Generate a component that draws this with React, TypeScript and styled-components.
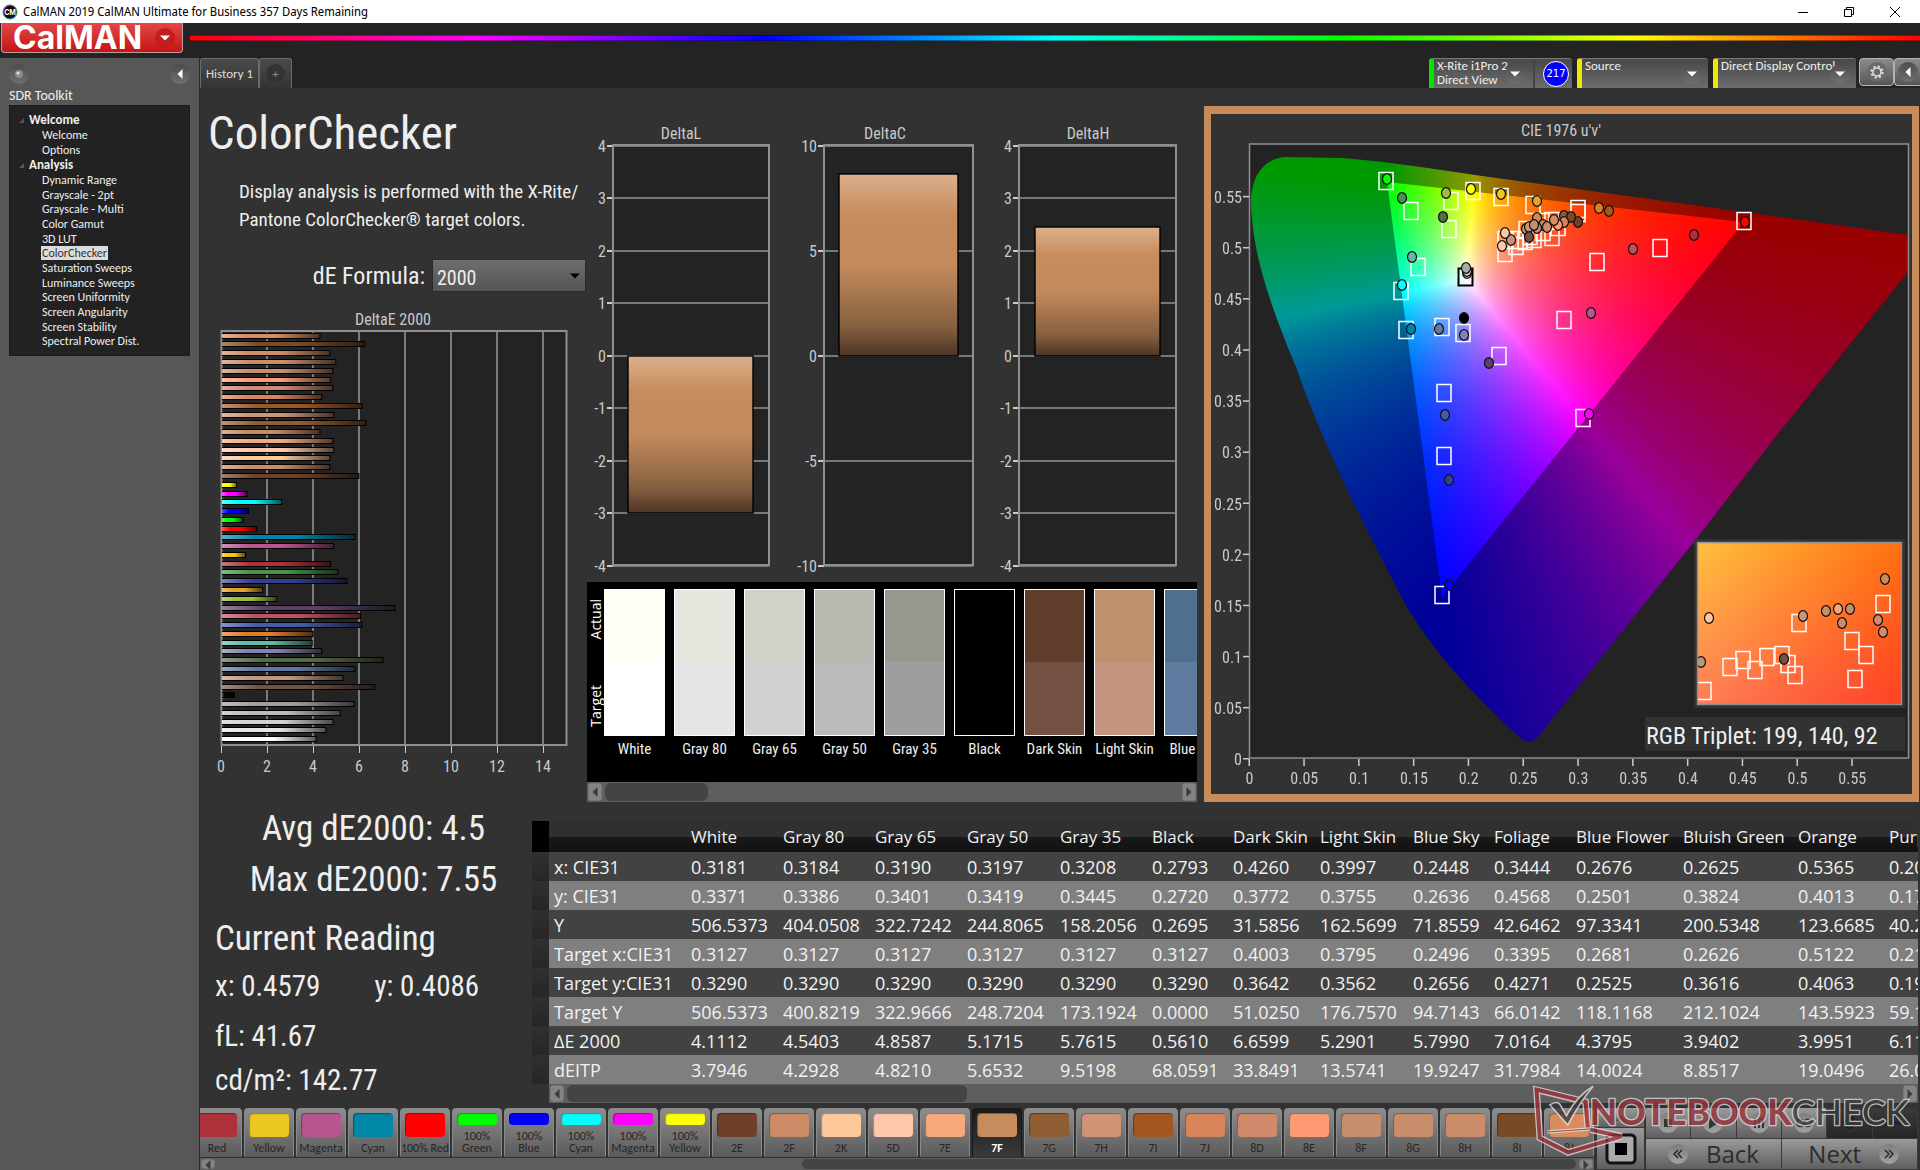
import React, { useEffect, useRef } from 'react';
import styled, { createGlobalStyle } from 'styled-components';

const UI = 'Carlito, "Open Sans", sans-serif';
const NARROW = '"Roboto Condensed", Carlito, "Open Sans", sans-serif';
const GRID = '"Open Sans", "Noto Sans", sans-serif';

const Global = createGlobalStyle`
  * { box-sizing: border-box; }
  body { margin: 0; background: #232323; color: #eee; font-family: ${UI}; }
  button { font: inherit; color: inherit; border: 0; padding: 0; background: none; }
  h1, h2, p, ul { margin: 0; padding: 0; font-weight: 400; list-style: none; }
  svg { display: block; }
`;

/* ---------- window frame ---------- */
const Page = styled.div`
  min-height: 100vh;
  display: flex;
  flex-direction: column;
  overflow: hidden;
`;
const TitleBar = styled.div`
  height: 23px;
  background: #fff;
  color: #000;
  display: flex;
  align-items: center;
  padding: 0 2px;
  font: 12px/16px "Noto Sans Display", "Open Sans", sans-serif;
`;
const TitleText = styled.span`
  flex: 1;
  padding-left: 5px;
`;
const WindowButton = styled.button`
  width: 46px;
  height: 23px;
  display: grid;
  place-items: center;
`;
const Header = styled.header`
  height: 35px;
  display: flex;
  align-items: flex-start;
  gap: 7px;
  padding-left: 1px;
  background: #232323;
`;
const LogoButton = styled.button`
  width: 182px;
  height: 30px;
  display: flex;
  align-items: center;
  justify-content: space-between;
  padding: 0 7px 0 11px;
  border: 1px solid #b9a0a0;
  border-top: 0;
  border-radius: 0 0 4px 4px;
  background: linear-gradient(#e04747, #c61414);
  color: #fff;
  font: 700 32px/28px Inter, sans-serif;
`;
const LogoCaret = styled.span`
  width: 20px;
  height: 20px;
  border-radius: 50%;
  display: grid;
  place-items: center;
  background: #c51d1d;
`;
const Spectrum = styled.div`
  flex: 1;
  height: 6px;
  margin-top: 12px;
  border: 1px solid rgba(0, 0, 0, 0.4);
  border-width: 1px 0;
  background: linear-gradient(90deg, #f00, #f0f, #00f, #0ff, #0f0, #ff0, #f00);
  background-clip: border-box;
`;
const Body = styled.div`
  flex: 1;
  display: grid;
  grid-template-columns: 200px minmax(0, 1fr);
`;

/* ---------- sidebar ---------- */
const Sidebar = styled.aside`
  background: #575757;
  border-right: 1px solid #2a2a2a;
  padding: 4px 9px 0;
`;
const SideTop = styled.div`
  display: flex;
  justify-content: space-between;
  height: 24px;
  align-items: center;
`;
const RoundButton = styled.button`
  width: 20px;
  height: 20px;
  flex: none;
  border-radius: 50%;
  display: grid;
  place-items: center;
  background: linear-gradient(#4c4c4c, #707070);
`;
const SideTitle = styled.h2`
  font-size: 14px;
  line-height: 19px;
  color: #f0f0f0;
`;
const Tree = styled.nav`
  border: 1px solid #1b1b1b;
  background: #222;
  padding: 6px 0 6px 9px;
`;
const TreeGroup = styled.button`
  display: flex;
  align-items: center;
  gap: 5px;
  font-size: 13px;
  font-weight: 700;
  line-height: 16px;
`;
const TreeList = styled.ul<{ $h: number }>`
  display: grid;
  grid-auto-rows: minmax(0, 1fr);
  height: ${p => p.$h}px;
  padding-left: 22px;
`;
const TreeLink = styled.a<{ $active?: boolean }>`
  display: block;
  width: fit-content;
  padding: 0 1px;
  font-size: 12px;
  line-height: 14px;
  text-decoration: none;
  white-space: nowrap;
  color: ${p => (p.$active ? '#333' : '#eee')};
  background: ${p => (p.$active ? '#dcdcdc' : 'none')};
`;

/* ---------- tab row ---------- */
const Main = styled.main`
  display: flex;
  flex-direction: column;
  min-width: 0;
`;
const TabRow = styled.div`
  display: flex;
  height: 30px;
  background: #232323;
`;
const Tab = styled.button<{ $w: number }>`
  width: ${p => p.$w}px;
  border: 1px solid #6b6b6b;
  border-bottom: 0;
  border-radius: 3px 3px 0 0;
  background: linear-gradient(#4b4b4b, #343434);
  font-size: 13px;
  color: #ddd;
  display: grid;
  place-items: center;
`;
const Plus = styled.span`
  width: 19px;
  height: 19px;
  border-radius: 50%;
  background: #333;
  color: #888;
  display: grid;
  place-items: center;
`;
const Spacer = styled.div`flex: 1;`;
const Pods = styled.div`
  display: flex;
  gap: 5px;
  padding-right: 3px;
`;
const Pod = styled.div<{ $w: number; $accent: string; $tight?: boolean }>`
  width: ${p => p.$w}px;
  display: flex;
  align-items: center;
  gap: 8px;
  padding-right: ${p => (p.$tight ? 3 : 6)}px;
  border-left: 5px solid ${p => p.$accent};
  border-top: 1px solid #7a7a7a;
  border-radius: 3px 3px 0 0;
  background: linear-gradient(#484848, #6c6c6c);
  font-size: 13px;
  line-height: 14px;
  color: #eee;
`;
const PodText = styled.span`
  flex: 1;
  min-width: 0;
  align-self: flex-start;
  padding-left: 3px;
  white-space: nowrap;
`;
const Badge = styled.span`
  width: 26px;
  height: 26px;
  flex: none;
  border-radius: 50%;
  border: 1px solid #fff;
  background: #00f;
  color: #fff;
  display: grid;
  place-items: center;
  font: 10px/12px "DejaVu Sans", sans-serif;
`;
const PodDivider = styled.span`
  width: 2px;
  height: 28px;
  flex: none;
  background: #444;
`;
const ToolButton = styled.button<{ $w: number; $flat?: boolean }>`
  width: ${p => p.$w}px;
  height: 28px;
  display: grid;
  place-items: center;
  border: 1px solid #b4b4b4;
  border-right-width: ${p => (p.$flat ? 0 : 1)}px;
  border-radius: ${p => (p.$flat ? '4px 0 0 4px' : '4px')};
  background: linear-gradient(#8b8b8b, #565656);
`;

/* ---------- workspace ---------- */
const Workspace = styled.div`
  flex: 1;
  background: #323232;
`;
const TopRow = styled.div`
  display: grid;
  grid-template-columns: 387px 610px minmax(0, 1fr);
  align-items: start;
`;
const Intro = styled.section`
  padding-top: 17px;
  font-family: ${NARROW};
`;
const Title = styled.h1`
  padding-left: 8px;
  font-size: 47px;
  line-height: 56px;
`;
const Lead = styled.p`
  padding: 17px 0 25px 39px;
  font-size: 19px;
  line-height: 28px;
  white-space: nowrap;
`;
const FormulaRow = styled.div`
  display: flex;
  justify-content: flex-end;
  align-items: center;
  gap: 7px;
  padding-right: 1px;
  margin-bottom: 7px;
`;
const FormulaLabel = styled.label`font-size: 24px; line-height: 32px;`;
const SelectWrap = styled.span`
  display: grid;
  align-items: center;
  & > * { grid-area: 1 / 1; }
  & > svg { justify-self: end; margin-right: 6px; pointer-events: none; }
`;
const Select = styled.select`
  appearance: none;
  width: 154px;
  height: 33px;
  border: 1px solid #2a2a2a;
  border-radius: 0;
  background: linear-gradient(#6e6e6e, #545454);
  color: #eee;
  font: 20px/24px ${NARROW};
  padding: 4px 4px 0;
`;
const ChartText = styled.text`
  font: 16px ${NARROW};
  fill: #c9c9c9;
`;
const DeltaRow = styled.div`
  display: flex;
  padding-top: 22px;
`;

/* ---------- swatch strip ---------- */
const Strip = styled.div`
  height: 200px;
  background: #000;
  display: flex;
  overflow: hidden;
  padding-top: 7px;
`;
const StripSide = styled.div`
  width: 17px;
  height: 148px;
  flex: none;
  display: flex;
  flex-direction: column;
  align-items: center;
  justify-content: space-between;
  padding: 10px 0;
`;
const SideLabel = styled.span`
  writing-mode: vertical-rl;
  rotate: 180deg;
  font: 14px/16px ${GRID};
  color: #fff;
`;
const SwatchCell = styled.figure`
  margin: 0 9px 0 0;
  width: 61px;
  flex: none;
  display: flex;
  flex-direction: column;
  align-items: center;
`;
const SwatchPair = styled.div<{ $a: string; $t: string }>`
  width: 61px;
  height: 147px;
  border: 1px solid #fff;
  background: linear-gradient(${p => p.$a} 50%, ${p => p.$t} 50%);
`;
const SwatchName = styled.figcaption`
  font: 15px/26px ${NARROW};
  white-space: nowrap;
`;

/* ---------- scrollbar ---------- */
const Bar = styled.div<{ $h: number }>`
  height: ${p => p.$h}px;
  display: flex;
  align-items: center;
  gap: 3px;
  padding: 0 1px;
  background: #5e5e5e;
`;
const BarButton = styled.button`
  width: 14px;
  height: calc(100% - 2px);
  border-radius: 3px;
  border: 1px solid #767676;
  background: #848484;
  display: grid;
  place-items: center;
`;
const BarTrack = styled.div`
  flex: 1;
  height: 100%;
  padding: 1px 0;
`;
const BarThumb = styled.div<{ $x: number; $w: number }>`
  width: ${p => p.$w}%;
  margin-left: ${p => p.$x}%;
  height: 100%;
  border-radius: 6px;
  background: #444;
`;

/* ---------- CIE panel ---------- */
const CiePanel = styled.section`
  margin: 18px 1px 0 7px;
  border: solid #c78c5c;
  border-width: 8px 7px;
  background: #323232;
`;

/* ---------- readings and table ---------- */
const BottomRow = styled.div`
  display: flex;
  align-items: flex-start;
  padding-top: 1px;
`;
const Readings = styled.section`
  width: 332px;
  flex: none;
  padding-left: 15px;
  font-family: ${NARROW};
  white-space: nowrap;
`;
const Big = styled.p<{ $center?: boolean; $gap?: number }>`
  font-size: 35px;
  line-height: 51px;
  text-align: ${p => (p.$center ? 'center' : 'left')};
  margin-top: ${p => p.$gap || 0}px;
`;
const Small = styled.p<{ $gap?: number }>`
  display: flex;
  gap: 54px;
  font-size: 29px;
  line-height: 44px;
  margin-top: ${p => p.$gap || 0}px;
`;
const TableArea = styled.div`
  flex: 1;
  min-width: 0;
  margin: 18px 2px 0 0;
`;
const TableClip = styled.div`overflow: hidden;`;
const Table = styled.table`
  table-layout: fixed;
  width: 1429px;
  border-collapse: collapse;
  font: 18px/28px ${GRID};
  color: #f2f2f2;
  th, td { padding: 0 0 0 5px; text-align: left; font-weight: 400; white-space: nowrap; height: 29px; }
  thead th { height: 31px; font-size: 17px; background: linear-gradient(#303030 50%, #191919 50%, #111); }
  thead th:first-child { background: #000; }
  tbody tr { background: #424242; }
  tbody tr:nth-child(even) { background: #7f7f7f; }
  tbody td:first-child { background: linear-gradient(#303030, #262626); }
`;
const TableScroll = styled.div`padding-left: 17px;`;

/* ---------- bottom bar ---------- */
const Footer = styled.footer`
  position: relative;
  display: grid;
  grid-template-columns: minmax(0, 1fr) 324px;
  padding-top: 5px;
  background: #323232;
`;
const PaletteArea = styled.div`padding: 0 2px 0 0;`;
const Palette = styled.div`
  display: flex;
  justify-content: flex-end;
  gap: 2px;
  height: 50px;
  overflow: hidden;
`;
const Patch = styled.button<{ $on?: boolean }>`
  width: 50px;
  flex: none;
  height: 49px;
  display: flex;
  flex-direction: column;
  align-items: center;
  justify-content: space-between;
  padding: 4px 0 3px;
  border: 1px solid ${p => (p.$on ? '#181818' : '#8a8a8a')};
  border-bottom: 0;
  border-radius: 4px 4px 2px 2px;
  background: ${p => (p.$on ? 'linear-gradient(#1a1a1a, #3a3a3a)' : 'linear-gradient(#8d8d8d, #5a5a5a)')};
  color: ${p => (p.$on ? '#fff' : '#262626')};
  font-size: 12px;
  font-weight: ${p => (p.$on ? 700 : 400)};
  line-height: 12px;
  white-space: nowrap;
`;
const PatchColor = styled.span<{ $c: string; $short: boolean }>`
  width: 40px;
  height: ${p => (p.$short ? 12 : 24)}px;
  border-radius: 4px;
  background: ${p => p.$c};
  box-shadow: inset 1px 1px 1px rgba(0, 0, 0, 0.35);
`;
const NavArea = styled.div`
  display: grid;
  grid-template-columns: 49px 1fr;
  height: 62px;
  padding-left: 1px;
  padding-right: 2px;
`;
const StopColumn = styled.div`
  display: grid;
  grid-template-rows: 20px 1fr;
  margin-right: 1px;
`;
const MetalButton = styled.button<{ $dark?: boolean }>`
  display: flex;
  align-items: center;
  justify-content: center;
  gap: 18px;
  border-right: 1px solid #3a3a3a;
  border-bottom: 1px solid #3a3a3a;
  background: ${p => (p.$dark ? 'linear-gradient(#3a3a3a, #262626)' : 'linear-gradient(#9a9a9a, #5f5f5f)')};
  color: #2c2c2c;
  font: 500 24px/28px ${GRID};
`;
const NextButton = styled(MetalButton)`
  justify-content: flex-end;
  padding-right: 18px;
`;
const Disc = styled.span<{ $dark?: boolean }>`
  width: 20px;
  height: 20px;
  border-radius: 50%;
  display: grid;
  place-items: center;
  background: ${p => (p.$dark ? '#2e2e2e' : 'linear-gradient(#7d7d7d, #a2a2a2)')};
`;
const MediaGrid = styled.div`
  display: grid;
  grid-template-rows: 31px 31px;
`;
const MediaRow = styled.div<{ $n: number }>`
  display: grid;
  grid-template-columns: repeat(${p => p.$n}, 1fr);
`;
const Watermark = styled.svg`
  position: absolute;
  right: 0;
  bottom: 12px;
  pointer-events: none;
`;

/* ---------- data ---------- */
const WELCOME = ['Welcome', 'Options'];
const ANALYSIS = ['Dynamic Range', 'Grayscale - 2pt', 'Grayscale - Multi', 'Color Gamut', '3D LUT', 'ColorChecker',
  'Saturation Sweeps', 'Luminance Sweeps', 'Screen Uniformity', 'Screen Angularity', 'Screen Stability', 'Spectral Power Dist.'];

const DELTA_E: [number, string][] = [
  [4.28, '#d98c5f'], [6.23, '#7a4a24'], [4.71, '#cc8e6a'], [4.97, '#c88d6b'], [4.84, '#c68f6e'], [4.75, '#ff9a74'],
  [4.84, '#d08a6c'], [4.36, '#d9855b'], [6.11, '#a35720'], [4.88, '#cf9476'], [6.28, '#8e5d33'], [4.28, '#c78c5c'],
  [4.84, '#f7a97e'], [4.88, '#ffc8ad'], [4.71, '#ffc89b'], [4.71, '#cc8a66'], [5.97, '#6f4027'], [0.66, '#ffff00'],
  [1.1, '#ff00ff'], [2.62, '#00ffff'], [1.18, '#0000ff'], [0.92, '#00ff00'], [1.53, '#ff0000'], [5.8, '#0085a8'],
  [4.88, '#b85590'], [1.05, '#eec81f'], [4.75, '#ae303a'], [5.06, '#46944a'], [5.45, '#33408f'], [1.79, '#e5a22d'],
  [2.4, '#9dbc40'], [7.55, '#5c4069'], [6.05, '#c25062'], [6.1, '#475ba7'], [3.98, '#e07b26'], [3.94, '#62bbaa'],
  [4.36, '#8681b0'], [7.02, '#566c42'], [5.8, '#5f7b9f'], [5.28, '#c3957f'], [6.66, '#735143'], [0.56, '#050505'],
  [5.76, '#9f9f9f'], [5.17, '#bbbbbb'], [4.85, '#d2d2d2'], [4.54, '#e6e6e6'], [4.11, '#ffffff']];

const STRIP: [string, string, string][] = [
  ['White', '#fffff6', '#ffffff'], ['Gray 80', '#e5e6dd', '#e5e5e6'], ['Gray 65', '#d0d1c8', '#d0d0d1'],
  ['Gray 50', '#b8b9b0', '#bababb'], ['Gray 35', '#96978d', '#9e9e9f'], ['Black', '#000', '#000'],
  ['Dark Skin', '#5f3e2b', '#735143'], ['Light Skin', '#be906d', '#c3957f'], ['Blue Sky', '#4f6f8e', '#5f7b9f']];

const COLS = [17, 137, 92, 92, 92, 93, 92, 81, 87, 93, 81, 82, 107, 115, 91, 77];
const HEADS = ['White', 'Gray 80', 'Gray 65', 'Gray 50', 'Gray 35', 'Black', 'Dark Skin', 'Light Skin', 'Blue Sky',
  'Foliage', 'Blue Flower', 'Bluish Green', 'Orange', 'Purplish'];
const ROWS = [
  ['x: CIE31', '0.3181', '0.3184', '0.3190', '0.3197', '0.3208', '0.2793', '0.4260', '0.3997', '0.2448', '0.3444', '0.2676', '0.2625', '0.5365', '0.2067'],
  ['y: CIE31', '0.3371', '0.3386', '0.3401', '0.3419', '0.3445', '0.2720', '0.3772', '0.3755', '0.2636', '0.4568', '0.2501', '0.3824', '0.4013', '0.1774'],
  ['Y', '506.5373', '404.0508', '322.7242', '244.8065', '158.2056', '0.2695', '31.5856', '162.5699', '71.8559', '42.6462', '97.3341', '200.5348', '123.6685', '40.2210'],
  ['Target x:CIE31', '0.3127', '0.3127', '0.3127', '0.3127', '0.3127', '0.3127', '0.4003', '0.3795', '0.2496', '0.3395', '0.2681', '0.2626', '0.5122', '0.2164'],
  ['Target y:CIE31', '0.3290', '0.3290', '0.3290', '0.3290', '0.3290', '0.3290', '0.3642', '0.3562', '0.2656', '0.4271', '0.2525', '0.3616', '0.4063', '0.1903'],
  ['Target Y', '506.5373', '400.8219', '322.9666', '248.7204', '173.1924', '0.0000', '51.0250', '176.7570', '94.7143', '66.0142', '118.1168', '212.1024', '143.5923', '59.1140'],
  ['ΔE 2000', '4.1112', '4.5403', '4.8587', '5.1715', '5.7615', '0.5610', '6.6599', '5.2901', '5.7990', '7.0164', '4.3795', '3.9402', '3.9951', '6.1120'],
  ['dEITP', '3.7946', '4.2928', '4.8210', '5.6532', '9.5198', '68.0591', '33.8491', '13.5741', '19.9247', '31.7984', '14.0024', '8.8517', '19.0496', '26.0110']];

const PATCHES: [string, string][] = [
  ['Red', '#ae303a'], ['Yellow', '#ebc821'], ['Magenta', '#b85590'], ['Cyan', '#0086a6'], ['100% Red', '#ff0000'],
  ['100% Green', '#00ff00'], ['100% Blue', '#0000ff'], ['100% Cyan', '#00ffff'], ['100% Magenta', '#ff00ff'],
  ['100% Yellow', '#ffff00'], ['2E', '#6f4027'], ['2F', '#cc8a66'], ['2K', '#ffc89b'], ['5D', '#ffc8ad'],
  ['7E', '#f7a97e'], ['7F', '#c78c5c'], ['7G', '#8e5d33'], ['7H', '#cf9476'], ['7I', '#a35720'], ['7J', '#d9855b'],
  ['8D', '#d08a6c'], ['8E', '#ff9a74'], ['8F', '#c68f6e'], ['8G', '#c88d6b'], ['8H', '#cc8e6a'], ['8I', '#7a4a24'],
  ['8J', '#d98c5f']];

const TARGETS = [[1386, 181], [1411, 211], [1451, 201], [1449, 229], [1473, 191], [1501, 197], [1533, 205], [1578, 209],
  [1578, 213], [1744, 221], [1660, 248], [1597, 262], [1564, 320], [1583, 418], [1418, 267], [1401, 291], [1406, 330],
  [1442, 327], [1463, 333], [1499, 356], [1444, 393], [1444, 456], [1442, 595], [1505, 253], [1505, 240], [1516, 246],
  [1520, 240], [1525, 241], [1526, 230], [1534, 239], [1530, 236], [1552, 237], [1558, 227], [1543, 232], [1552, 221], [1542, 222]];
const DOTS: [number, number, string][] = [[1387, 179, '#00ff00'], [1402, 198, '#46944a'], [1446, 193, '#9dbc40'],
  [1443, 217, '#566c42'], [1471, 189, '#ffff00'], [1501, 194, '#eec81f'], [1537, 201, '#e5a22d'], [1599, 208, '#e07b26'],
  [1609, 211, '#a35720'], [1745, 222, '#ff0000'], [1694, 235, '#ae303a'], [1633, 249, '#c25062'], [1591, 313, '#ba5593'],
  [1589, 414, '#ff00ff'], [1412, 257, '#62bbaa'], [1402, 285, '#00ffff'], [1411, 329, '#0086a8'], [1439, 329, '#5f7b9f'],
  [1464, 318, '#000000'], [1464, 335, '#8681b0'], [1489, 363, '#5c4069'], [1445, 415, '#475ba7'], [1449, 480, '#33408f'],
  [1449, 585, '#0000ff'], [1467, 273, '#dddddd'], [1467, 271, '#cccccc'], [1466, 268, '#aaaaaa'], [1537, 218, '#c78c5c'],
  [1564, 216, '#8e5d33'], [1578, 222, '#6f4027'], [1571, 217, '#7a4a24'], [1564, 222, '#d9855b'], [1558, 225, '#ff9a74'],
  [1543, 225, '#cc8a66'], [1547, 227, '#d08a6c'], [1554, 220, '#d98c5f'], [1537, 228, '#c68f6e'], [1526, 229, '#c68f6e'],
  [1529, 227, '#cf9476'], [1534, 225, '#c88d6b'], [1529, 237, '#735143'], [1511, 240, '#c3957f'], [1505, 233, '#ffc89b'],
  [1502, 246, '#ffc8ad']];
const INSET_TARGETS = [[1704, 691], [1730, 667], [1743, 660], [1755, 670], [1767, 657], [1782, 655], [1788, 664],
  [1795, 675], [1799, 623], [1852, 641], [1866, 655], [1855, 679], [1883, 604]];
const INSET_DOTS: [number, number, string][] = [[1709, 618, '#ffc89b'], [1701, 662, '#c3957f'], [1803, 616, '#cf9476'],
  [1826, 611, '#c68f6e'], [1838, 609, '#f7a97e'], [1850, 609, '#c88d6b'], [1842, 623, '#cc8a66'], [1885, 579, '#c78c5c'],
  [1878, 620, '#d08a6c'], [1883, 632, '#d08a6c'], [1784, 659, '#735143']];

/* ---------- CIE 1976 diagram fill ---------- */
const PX0 = 1249.5, PY0 = 758, SX = 1096, SY = 1022;
const VIEW = { x: 1211, y: 114, w: 701, h: 680 };

function gamutColor(u: number, v: number, k: number): number[] {
  const d = 6 * u - 16 * v + 12;
  const x = (9 * u) / d;
  const y = Math.max((4 * v) / d, 0.0001);
  const X = x / y, Z = (1 - x - y) / y;
  const lin = [
    3.2406 * X - 1.5372 - 0.4986 * Z,
    -0.9689 * X + 1.8758 + 0.0415 * Z,
    0.0557 * X - 0.204 + 1.057 * Z].map(c => Math.max(c, 0));
  const m = Math.max(...lin) || 1;
  return lin.map(c => (c / m) * 255 * k);
}

function fillLayer(w: number, h: number, at: (x: number, y: number) => number[]) {
  const c = document.createElement('canvas');
  c.width = w;
  c.height = h;
  const g = c.getContext('2d')!;
  const img = g.createImageData(w, h);
  for (let j = 0; j < h; j++) {
    for (let i = 0; i < w; i++) {
      const [r, gg, b] = at(i, j);
      const o = (j * w + i) * 4;
      img.data[o] = r;
      img.data[o + 1] = gg;
      img.data[o + 2] = b;
      img.data[o + 3] = 255;
    }
  }
  g.putImageData(img, 0, 0);
  return c;
}

function drawDiagram(canvas: HTMLCanvasElement) {
  const g = canvas.getContext('2d')!;
  const { x: ox, y: oy, w, h } = VIEW;
  const color = (k: number) => (i: number, j: number) =>
    gamutColor((i + ox - PX0) / SX, (PY0 - (j + oy)) / SY, k);
  g.clearRect(0, 0, w, h);
  g.translate(-ox, -oy);

  g.save();
  g.beginPath();
  g.rect(1250, 145, 658, 613);
  g.clip();
  g.beginPath();
  g.moveTo(1342, 158);
  g.lineTo(1285, 157);
  g.bezierCurveTo(1262, 159, 1251, 178, 1251, 203);
  g.bezierCurveTo(1252, 250, 1268, 300, 1296, 367);
  g.bezierCurveTo(1321, 440, 1361, 520, 1407, 607);
  g.bezierCurveTo(1439, 660, 1480, 700, 1520, 738);
  g.quadraticCurveTo(1529, 745, 1537, 738);
  g.lineTo(1697, 538);
  g.lineTo(1773, 440);
  g.lineTo(1908, 272);
  g.lineTo(1908, 235);
  g.lineTo(1737, 211);
  g.lineTo(1475, 175);
  g.quadraticCurveTo(1384, 161, 1342, 158);
  g.closePath();
  g.clip();
  g.drawImage(fillLayer(w, h, color(0.6)), ox, oy);
  g.restore();

  g.save();
  g.beginPath();
  g.moveTo(1387, 182);
  g.lineTo(1744, 222);
  g.lineTo(1442, 597);
  g.closePath();
  g.clip();
  g.drawImage(fillLayer(w, h, color(1)), ox, oy);
  g.restore();
  g.setTransform(1, 0, 0, 1, 0, 0);
}

function drawInset(canvas: HTMLCanvasElement) {
  const corners = [[255, 192, 62], [255, 112, 16], [255, 124, 88], [255, 64, 38]];
  const w = canvas.width, h = canvas.height;
  const layer = fillLayer(w, h, (i, j) => {
    const a = i / w, b = j / h;
    return [0, 1, 2].map(k =>
      (corners[0][k] * (1 - a) + corners[1][k] * a) * (1 - b) + (corners[2][k] * (1 - a) + corners[3][k] * a) * b);
  });
  canvas.getContext('2d')!.drawImage(layer, 0, 0);
}

/* ---------- parts ---------- */
const Caret = ({ dir = 'down', fill = '#fff', s = 10 }: { dir?: string; fill?: string; s?: number }) => (
  <svg width={s} height={s} viewBox="0 0 10 10" aria-hidden="true">
    <path d={dir === 'down' ? 'M0 2.5h10L5 7.5z' : dir === 'left' ? 'M7.5 0v10L2.5 5z' : 'M2.5 0v10l5-5z'} fill={fill} />
  </svg>
);

const Scrollbar = ({ h, x, w, name }: { h: number; x: number; w: number; name: string }) => (
  <Bar $h={h}>
    <BarButton aria-label={`Scroll ${name} left`}><Caret dir="left" fill="#3c3c3c" /></BarButton>
    <BarTrack><BarThumb $x={x} $w={w} /></BarTrack>
    <BarButton aria-label={`Scroll ${name} right`}><Caret dir="right" fill="#3c3c3c" /></BarButton>
  </Bar>
);

function mix(hex: string, to: number, k: number) {
  const n = hex.slice(1);
  return `rgb(${[0, 2, 4].map(i => Math.round(parseInt(n.slice(i, i + 2), 16) * (1 - k) + to * k)).join(',')})`;
}

const DeltaEChart = () => (
  <svg width="387" height="490" viewBox="200 300 387 490">
    <defs>
      {DELTA_E.map(([, c], i) => (
        <linearGradient key={i} id={`bar${i}`}>
          <stop offset="0" stopColor={mix(c, 255, 0.35)} />
          <stop offset="0.25" stopColor={c} />
          <stop offset="0.55" stopColor={c} />
          <stop offset="1" stopColor={mix(c, 0, 0.65)} />
        </linearGradient>
      ))}
    </defs>
    <ChartText x="393" y="326" textAnchor="middle">DeltaE 2000</ChartText>
    <rect x="221.5" y="332" width="345" height="414" fill="#232323" />
    {[2, 4, 6, 8, 10, 12, 14].map(n => (
      <rect key={n} x={220 + n * 23} y="332" width="2" height="414" fill="#7a7a7a" />
    ))}
    <rect x="221.5" y="332" width="345" height="414" fill="none" stroke="#8f8f8f" strokeWidth="2" />
    {DELTA_E.map(([v], i) => (
      <rect key={i} x="221.5" y={Math.round(336.7 + i * 8.77) - 2.5} width={v * 23} height="5"
        fill={`url(#bar${i})`} stroke="#000" />
    ))}
    <rect x="221" y="332" width="1" height="414" fill="#8f8f8f" />
    {[0, 2, 4, 6, 8, 10, 12, 14].map(n => (
      <g key={n}>
        <rect x={221 + n * 23} y="747" width="1" height="7" fill="#ccc" />
        <ChartText x={221 + n * 23} y="773" textAnchor="middle">{n}</ChartText>
      </g>
    ))}
  </svg>
);

interface DeltaProps { name: string; x: number; w: number; left: number; right: number; cx: number; max: number; step: number; from: number; to: number; b0: number; b1: number }
const DeltaChart = (p: DeltaProps) => {
  const y = (v: number) => Math.round(354.75 - (v / p.max) * 210.25);
  const ticks: number[] = [];
  for (let v = p.max; v >= -p.max; v -= p.step) ticks.push(v);
  return (
    <svg width={p.w} height="472" viewBox={`${p.x} 110 ${p.w} 472`}>
      <defs>
        <linearGradient id={p.name} x2="0" y2="1">
          <stop offset="0" stopColor="#dcb08d" />
          <stop offset="0.22" stopColor="#c78c5c" />
          <stop offset="0.5" stopColor="#c48a5d" />
          <stop offset="0.84" stopColor="#85603f" />
          <stop offset="1" stopColor="#4c3425" />
        </linearGradient>
      </defs>
      <ChartText x={p.cx} y="139" textAnchor="middle">{p.name}</ChartText>
      <rect x={p.left} y="145" width={p.right - p.left} height="420" fill="#232323" />
      {ticks.map(v => (
        <g key={v}>
          <rect x={p.left} y={y(v)} width={p.right - p.left} height="2" fill="#777" />
          <rect x={p.left - 6} y={y(v)} width="6" height="2" fill="#ccc" />
          <ChartText x={p.left - 7} y={y(v) + 7} textAnchor="end">{v}</ChartText>
        </g>
      ))}
      <rect x={p.left} y="145" width={p.right - p.left} height="420" fill="none" stroke="#8f8f8f" strokeWidth="2" />
      <rect x={p.b0} y={y(p.from) + 1} width={p.b1 - p.b0} height={y(p.to) - y(p.from)} fill={`url(#${p.name})`} stroke="#000" strokeWidth="1.4" />
    </svg>
  );
};

const Marks = ({ targets, dots }: { targets: number[][]; dots: [number, number, string][] }) => (
  <g>
    {targets.map(([x, y], i) => (
      <rect key={i} x={x - 7} y={y - 8.5} width="14" height="17" fill="none" stroke="#fff" strokeWidth="1.5" />
    ))}
    {dots.map(([x, y, c], i) => (
      <ellipse key={i} cx={x} cy={y} rx="4.5" ry="5.3" fill={c} stroke="#111" strokeWidth="1.2" />
    ))}
  </g>
);

const CieChart = () => {
  const diagram = useRef<HTMLCanvasElement>(null);
  const inset = useRef<HTMLCanvasElement>(null);
  useEffect(() => {
    if (diagram.current) drawDiagram(diagram.current);
    if (inset.current) drawInset(inset.current);
  }, []);
  const steps = Array.from({ length: 12 }, (_, i) => i);
  const label = (i: number) => String(Math.round(i * 5) / 100);
  return (
    <svg width="100%" viewBox={`${VIEW.x} ${VIEW.y} ${VIEW.w} ${VIEW.h}`}>
      <defs><clipPath id="insetClip"><rect x="1698" y="543" width="203" height="162" /></clipPath></defs>
      <ChartText x="1561" y="136" textAnchor="middle">CIE 1976 u'v'</ChartText>
      <rect x="1250" y="144" width="658" height="614" fill="#232323" />
      <foreignObject x={VIEW.x} y={VIEW.y} width={VIEW.w} height={VIEW.h}>
        <canvas ref={diagram} width={VIEW.w} height={VIEW.h} />
      </foreignObject>
      <rect x="1249.5" y="144" width="659" height="614" fill="none" stroke="#8f8f8f" strokeWidth="1.5" />
      {steps.map(i => {
        const x = PX0 + i * 54.8, y = PY0 - i * 51.1;
        return (
          <g key={i}>
            <rect x={x - 1} y="759" width="1.5" height="7" fill="#ccc" />
            <ChartText x={x} y="784" textAnchor="middle">{label(i)}</ChartText>
            <rect x="1243" y={y} width="6" height="1.5" fill="#ccc" />
            <ChartText x="1242" y={y + 7} textAnchor="end">{label(i)}</ChartText>
          </g>
        );
      })}
      <Marks targets={TARGETS} dots={DOTS.slice(0, 24)} />
      <rect x="1458.5" y="268.5" width="14" height="17" fill="none" stroke="#000" strokeWidth="2" />
      <Marks targets={[]} dots={DOTS.slice(24)} />
      <rect x="1694" y="539" width="211" height="169" fill="#323232" />
      <foreignObject x="1698" y="543" width="203" height="162">
        <canvas ref={inset} width="203" height="162" />
      </foreignObject>
      <g clipPath="url(#insetClip)"><Marks targets={INSET_TARGETS} dots={INSET_DOTS} /></g>
      <rect x="1697.5" y="542.5" width="204" height="162" fill="none" stroke="#8f8f8f" strokeWidth="1.5" />
      <rect x="1645" y="717" width="260" height="34" fill="#323232" />
      <text x="1646" y="744" fontSize="24" fontFamily={NARROW} fill="#eee">RGB Triplet: 199, 140, 92</text>
    </svg>
  );
};

const MEDIA = ['M6 6h8v8H6z', 'M6 4l9 6-9 6z', 'M5 5h2v10H5zM9 5h6v10h-2V7h-2v8H9z',
  'M3 10a3.5 3.5 0 1 1 7 0 3.5 3.5 0 1 1-7 0M10 10a3.5 3.5 0 1 1 7 0 3.5 3.5 0 1 1-7 0',
  'M14 7a5 5 0 1 0 1 4M14 3v4h-4', 'M6 10h8'];
const MEDIA_NAMES = ['Stop', 'Play', 'Step', 'Loop', 'Refresh', 'Remove'];

export default function App() {
  return (
    <Page>
      <Global />
      <TitleBar>
        <svg width="16" height="16" viewBox="0 0 16 16">
          <circle cx="8" cy="8" r="7" fill="#111" stroke="#3b9a6c" />
          <path d="M2 5a7 7 0 0 1 5-4" stroke="#d33ad6" fill="none" />
          <path d="M14 11a7 7 0 0 1-6 4" stroke="#3678e0" fill="none" />
          <text x="8" y="11" textAnchor="middle" fontSize="7" fontWeight="700" fontFamily="Inter" fill="#fff">CM</text>
        </svg>
        <TitleText>CalMAN 2019 CalMAN Ultimate for Business 357 Days Remaining</TitleText>
        <WindowButton aria-label="Minimize">
          <svg width="10" height="10"><path d="M0 5.5h10" stroke="#000" /></svg>
        </WindowButton>
        <WindowButton aria-label="Restore">
          <svg width="10" height="10"><path d="M.5 2.5h7v7h-7zM2.5 2.5v-2h7v7h-2" stroke="#000" fill="none" /></svg>
        </WindowButton>
        <WindowButton aria-label="Close">
          <svg width="10" height="10"><path d="M0 0l10 10M10 0L0 10" stroke="#000" /></svg>
        </WindowButton>
      </TitleBar>
      <Header>
        <LogoButton>CalMAN<LogoCaret><Caret /></LogoCaret></LogoButton>
        <Spectrum />
      </Header>
      <Body>
        <Sidebar>
          <SideTop>
            <RoundButton aria-label="Status">
              <svg width="10" height="10"><circle cx="5" cy="5" r="4" fill="#8c8c8c" /><circle cx="4" cy="4" r="1.6" fill="#ddd" /></svg>
            </RoundButton>
            <RoundButton aria-label="Collapse"><Caret dir="left" /></RoundButton>
          </SideTop>
          <SideTitle>SDR Toolkit</SideTitle>
          <Tree>
            <TreeGroup><svg width="5" height="5"><path d="M5 0v5H0z" fill="#555" /></svg>Welcome</TreeGroup>
            <TreeList $h={29}>
              {WELCOME.map(t => <li key={t}><TreeLink href="#">{t}</TreeLink></li>)}
            </TreeList>
            <TreeGroup><svg width="5" height="5"><path d="M5 0v5H0z" fill="#555" /></svg>Analysis</TreeGroup>
            <TreeList $h={176}>
              {ANALYSIS.map(t => <li key={t}><TreeLink href="#" $active={t === 'ColorChecker'}>{t}</TreeLink></li>)}
            </TreeList>
          </Tree>
        </Sidebar>
        <Main>
          <TabRow>
            <Tab $w={59}>History 1</Tab>
            <Tab $w={33} aria-label="Add history"><Plus>+</Plus></Tab>
            <Spacer />
            <Pods>
              <Pod $w={143} $accent="#00e600" $tight>
                <PodText>X-Rite i1Pro 2<br />Direct View</PodText>
                <RoundButton aria-label="Meter menu"><Caret /></RoundButton>
                <PodDivider />
                <Badge>217</Badge>
              </Pod>
              <Pod $w={131} $accent="#ebeb00">
                <PodText>Source</PodText>
                <RoundButton aria-label="Source menu"><Caret /></RoundButton>
              </Pod>
              <Pod $w={143} $accent="#ebeb00">
                <PodText>Direct Display Control</PodText>
                <RoundButton aria-label="Display menu"><Caret /></RoundButton>
              </Pod>
            </Pods>
            <ToolButton $w={35} aria-label="Settings">
              <svg width="20" height="20" viewBox="0 0 20 20">
                <circle cx="10" cy="10" r="10" fill="#6a6a6a" />
                <circle cx="10" cy="10" r="4" fill="none" stroke="#ddd" strokeWidth="1.6" />
                <circle cx="10" cy="10" r="5.6" fill="none" stroke="#ddd" strokeWidth="2" strokeDasharray="2.2 2.2" />
              </svg>
            </ToolButton>
            <ToolButton $w={26} $flat aria-label="Collapse panel"><RoundButton as="span"><Caret dir="left" /></RoundButton></ToolButton>
          </TabRow>
          <Workspace>
            <TopRow>
              <Intro>
                <Title>ColorChecker</Title>
                <Lead>Display analysis is performed with the X-Rite/<br />Pantone ColorChecker® target colors.</Lead>
                <FormulaRow>
                  <FormulaLabel htmlFor="formula">dE Formula:</FormulaLabel>
                  <SelectWrap>
                    <Select id="formula" defaultValue="2000"><option>2000</option></Select>
                    <Caret fill="#000" />
                  </SelectWrap>
                </FormulaRow>
                <DeltaEChart />
              </Intro>
              <section>
                <DeltaRow>
                  <DeltaChart name="DeltaL" x={587} w={196} left={613} right={769} cx={681} max={4} step={1} from={0} to={-3} b0={628} b1={753} />
                  <DeltaChart name="DeltaC" x={783} w={204} left={824} right={973} cx={885} max={10} step={5} from={8.63} to={0} b0={839} b1={958} />
                  <DeltaChart name="DeltaH" x={987} w={210} left={1019} right={1176} cx={1088} max={4} step={1} from={2.45} to={0} b0={1035} b1={1160} />
                </DeltaRow>
                <Strip>
                  <StripSide><SideLabel>Actual</SideLabel><SideLabel>Target</SideLabel></StripSide>
                  {STRIP.map(([n, a, t]) => (
                    <SwatchCell key={n}><SwatchPair $a={a} $t={t} /><SwatchName>{n}</SwatchName></SwatchCell>
                  ))}
                </Strip>
                <Scrollbar h={20} x={0} w={18} name="swatches" />
              </section>
              <CiePanel><CieChart /></CiePanel>
            </TopRow>
            <BottomRow>
              <Readings>
                <Big $center>Avg dE2000: 4.5</Big>
                <Big $center>Max dE2000: 7.55</Big>
                <Big $gap={8}>Current Reading</Big>
                <Small><span>x: 0.4579</span><span>y: 0.4086</span></Small>
                <Small $gap={6}>fL: 41.67</Small>
                <Small>cd/m²: 142.77</Small>
              </Readings>
              <TableArea>
                <TableClip>
                  <Table>
                    <colgroup>{COLS.map((w, i) => <col key={i} width={w} />)}</colgroup>
                    <thead><tr><th /><th />{HEADS.map(h => <th key={h} scope="col">{h}</th>)}</tr></thead>
                    <tbody>
                      {ROWS.map(([name, ...vals]) => (
                        <tr key={name}><td /><th scope="row">{name}</th>{vals.map((v, i) => <td key={i}>{v}</td>)}</tr>
                      ))}
                    </tbody>
                  </Table>
                </TableClip>
                <TableScroll><Scrollbar h={19} x={0} w={30} name="table" /></TableScroll>
              </TableArea>
            </BottomRow>
          </Workspace>
          <Footer>
            <PaletteArea>
              <Palette>
                {PATCHES.map(([n, c]) => {
                  const two = n.startsWith('100%') && n !== '100% Red';
                  return (
                    <Patch key={n} $on={n === '7F'}>
                      <PatchColor $c={c} $short={two} />
                      {two ? <span>100%<br />{n.slice(5)}</span> : <span>{n}</span>}
                    </Patch>
                  );
                })}
              </Palette>
              <Scrollbar h={12} x={43} w={57} name="patches" />
            </PaletteArea>
            <NavArea>
              <StopColumn>
                <MetalButton aria-label="Up">
                  <svg width="12" height="7"><path d="M0 7l6-6 6 6z" fill="#555" /></svg>
                </MetalButton>
                <MetalButton aria-label="Full screen pattern">
                  <svg width="32" height="32"><rect x="2" y="2" width="28" height="28" rx="4" fill="#aaa" stroke="#111" strokeWidth="3" /><rect x="10" y="10" width="12" height="12" fill="#000" /></svg>
                </MetalButton>
              </StopColumn>
              <MediaGrid>
                <MediaRow $n={6}>
                  {MEDIA.map((d, i) => (
                    <MetalButton key={i} $dark={i > 3} aria-label={MEDIA_NAMES[i]}>
                      <Disc $dark={i > 3}>
                        <svg width="20" height="20"><path d={d} fill={i < 3 ? '#333' : 'none'} stroke={i > 3 ? '#1c1c1c' : '#333'} strokeWidth={i < 3 ? 0 : 1.5} /></svg>
                      </Disc>
                    </MetalButton>
                  ))}
                </MediaRow>
                <MediaRow $n={2}>
                  <MetalButton>
                    <Disc><svg width="10" height="10"><path d="M5 1L1 5l4 4M9 1L5 5l4 4" stroke="#222" strokeWidth="1.4" fill="none" /></svg></Disc>
                    Back
                  </MetalButton>
                  <NextButton>
                    Next
                    <Disc><svg width="10" height="10"><path d="M1 1l4 4-4 4M5 1l4 4-4 4" stroke="#222" strokeWidth="1.4" fill="none" /></svg></Disc>
                  </NextButton>
                </MediaRow>
              </MediaGrid>
            </NavArea>
            <Watermark width="387" height="75" viewBox="280 40 1160 225">
              <g opacity="0.78">
                <g fill="none" strokeLinejoin="miter">
                  <path d="M444 176L437 96L290 60L300 205L385 248L545 200L452 180" stroke="#ddd" strokeWidth="20" />
                  <path d="M444 176L437 96L290 60L300 205L385 248L545 200L452 180" stroke="#a03038" strokeWidth="12" />
                  <path d="M322 187L450 178" stroke="#ddd" strokeWidth="10" />
                  <path d="M322 187L450 178" stroke="#a03038" strokeWidth="3" />
                </g>
                <path d="M330 106Q350 92 360 104L380 138Q412 78 460 50Q420 98 384 166z" fill="#3a3a3a" stroke="#ddd" strokeWidth="5" />
                <g fontFamily="Lato, sans-serif" fontSize="106" stroke="#ddd" strokeWidth="8" paintOrder="stroke" strokeLinejoin="round">
                  <text x="1056" y="167" textAnchor="end" fontWeight="900" fill="#96333a">NOTEBOOK</text>
                  <text x="1408" y="167" textAnchor="end" fontWeight="500" fill="#3a3a3a">CHECK</text>
                </g>
              </g>
            </Watermark>
          </Footer>
        </Main>
      </Body>
    </Page>
  );
}
